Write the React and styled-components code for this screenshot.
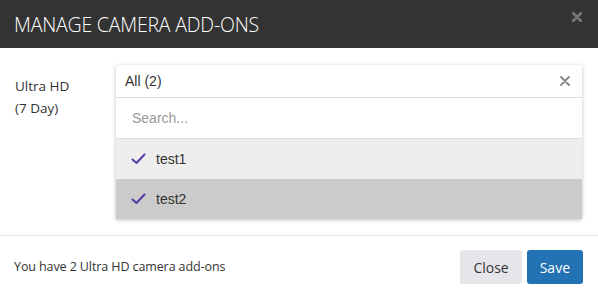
import React from 'react';
import styled, { createGlobalStyle } from 'styled-components';

const Global = createGlobalStyle`
  html, body { margin: 0; padding: 0; background: #fff; }
  body { font-family: 'Open Sans', sans-serif; color: #333; }
`;

function Check() {
  return (
    <svg width="15" height="12" viewBox="0 0 15 12">
      <path d="M1.5 6.5 L5.5 10 L13.5 1.5" fill="none" stroke="#5b3aa6" strokeWidth="2" strokeLinecap="round" strokeLinejoin="round" />
    </svg>
  );
}

function Cross({ size, color, width }) {
  return (
    <svg width={size} height={size} viewBox="0 0 10 10">
      <path d="M1 1 L9 9 M9 1 L1 9" stroke={color} strokeWidth={width} strokeLinecap="round" />
    </svg>
  );
}

function App() {
  const items = ['test1', 'test2'];
  return (
    <>
      <Global />
      <Modal>
        <Header>
          <Title>MANAGE CAMERA ADD-ONS</Title>
          <HeaderClose><Cross size={10} color="#777" width={2.6} /></HeaderClose>
        </Header>
        <Body>
          <Label>Ultra HD<br />(7 Day)</Label>
          <SelectWrap>
            <SelectBox>
              <span>All (2)</span>
              <Cross size={10} color="#8a8a8a" width={1.9} />
            </SelectBox>
            <Menu>
              <Search>Search...</Search>
              {items.map((it, i) => (
                <Option key={it} $active={i === 1}>
                  <Check />
                  <span>{it}</span>
                </Option>
              ))}
            </Menu>
          </SelectWrap>
        </Body>
        <Footer>
          <FooterText>You have 2 Ultra HD camera add-ons</FooterText>
          <Buttons>
            <Button>Close</Button>
            <Button $primary>Save</Button>
          </Buttons>
        </Footer>
      </Modal>
    </>
  );
}

const Modal = styled.div`
  width: 598px;
  height: 299px;
  display: flex;
  flex-direction: column;
  background: #fff;
`;

const Header = styled.div`
  height: 48px;
  background: #333333;
  display: flex;
  align-items: center;
  justify-content: space-between;
  padding: 0 16px 0 14px;
  box-sizing: border-box;
`;

const Title = styled.div`
  color: #fff;
  font-family: 'Open Sans', sans-serif;
  font-weight: 300;
  font-size: 19.5px;
  letter-spacing: -0.2px;
  margin-top: 1px;
`;

const HeaderClose = styled.div`
  display: flex;
  align-self: flex-start;
  margin-top: 12px;
`;

const Body = styled.div`
  flex: 1;
  display: flex;
  padding: 17px 16px 0 15px;
  border-bottom: 1px solid #e5e5e5;
`;

const Label = styled.div`
  width: 101px;
  font-size: 13.5px;
  line-height: 22px;
  color: #333;
  padding-top: 10px;
`;

const SelectWrap = styled.div`
  flex: 1;
  box-shadow: 0 1px 4px rgba(0, 0, 0, 0.25);
  align-self: flex-start;
  border-radius: 2px;
`;

const SelectBox = styled.div`
  height: 32px;
  display: flex;
  align-items: center;
  justify-content: space-between;
  padding: 0 12px 0 9px;
  font-family: 'Liberation Sans', Arial, sans-serif;
  font-size: 14px;
  color: #333;
  border-bottom: 1px solid #ddd;
`;

const Menu = styled.div`
  display: flex;
  flex-direction: column;
`;

const Search = styled.div`
  height: 40px;
  display: flex;
  align-items: center;
  padding-left: 16px;
  font-family: 'Liberation Sans', Arial, sans-serif;
  font-size: 14px;
  color: #999;
  border-bottom: 1px solid #ddd;
`;

const Option = styled.div`
  height: 40px;
  display: flex;
  align-items: center;
  gap: 10px;
  padding-left: 15px;
  font-family: 'Liberation Sans', Arial, sans-serif;
  font-size: 14px;
  color: #333;
  background: ${p => (p.$active ? '#cbcbcb' : '#eeeeee')};
`;

const Footer = styled.div`
  height: 63px;
  display: flex;
  align-items: center;
  justify-content: space-between;
  padding: 0 15px 0 14px;
`;

const FooterText = styled.div`
  font-size: 12.5px;
  letter-spacing: -0.1px;
  color: #333;
  margin-top: -2px;
`;

const Buttons = styled.div`
  display: flex;
  gap: 5px;
  margin-top: -1px;
`;

const Button = styled.button`
  height: 34px;
  padding: 0 13px;
  border: none;
  border-radius: 3px;
  font-family: 'Open Sans', sans-serif;
  font-size: 14px;
  color: ${p => (p.$primary ? '#fff' : '#333')};
  background: ${p => (p.$primary ? '#2272b4' : '#e6e6ea')};
`;

export default App;
